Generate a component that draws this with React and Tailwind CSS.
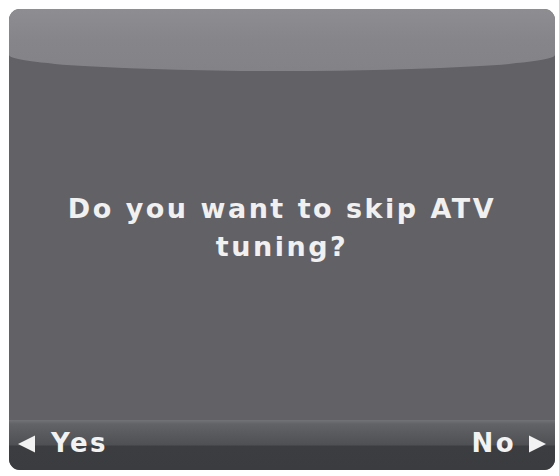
import React from 'react'

const font = { fontFamily: '"DejaVu Sans", Verdana, sans-serif' }

function Arrow({ dir }) {
  return (
    <svg width="19" height="20" viewBox="0 0 19 20" className="shrink-0">
      {dir === 'left'
        ? <path d="M1 10 L18 1.5 L18 18.5 Z" fill="#f2f2f2" />
        : <path d="M18 10 L1 1.5 L1 18.5 Z" fill="#f2f2f2" />}
    </svg>
  )
}

export default function App() {
  return (
    <div className="w-[559px] h-[476px] bg-white p-[9px] pr-[4px] pb-[6px]">
      <div
        className="w-full h-full rounded-[11px] overflow-hidden flex flex-col bg-[#626166] text-[#f0f0f0]"
        style={font}
      >
        {/* top gloss */}
        <div className="h-[62px] shrink-0 rounded-b-[50%_16px] bg-gradient-to-b from-[#8e8d92] via-[#86858a] to-[#838287]" />

        {/* message */}
        <div className="flex-1 flex flex-col items-center pt-[119px] font-bold text-[27px] leading-[38px] tracking-[2.5px] text-center">
          <p>Do you want to skip ATV</p>
          <p>tuning?</p>
        </div>

        {/* bottom bar */}
        <div className="h-[50px] shrink-0 flex items-center justify-between px-[8px] pb-[3px] font-bold text-[26px] tracking-[2.5px] text-[#f2f2f2] bg-[linear-gradient(to_bottom,#727376_0px,#626366_4px,#4e5053_25px,#3b3d40_26px,#3a3c3f_100%)]">
          <div className="flex items-center gap-[15px]">
            <Arrow dir="left" />
            <span>Yes</span>
          </div>
          <div className="flex items-center gap-[12px]">
            <span>No</span>
            <Arrow dir="right" />
          </div>
        </div>
      </div>
    </div>
  )
}
